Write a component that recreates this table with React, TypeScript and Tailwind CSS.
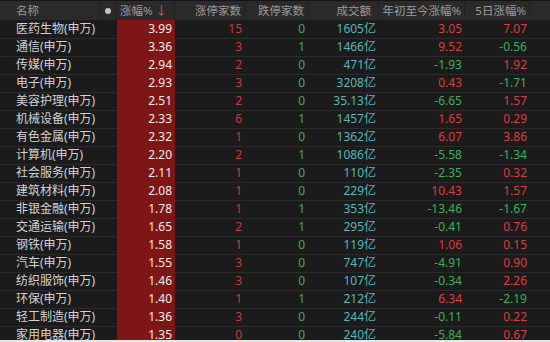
const rows: [string, string, number, number, string, string, string][] = [
  ["医药生物(申万)", "3.99", 15, 0, "1605亿", "3.05", "7.07"],
  ["通信(申万)", "3.36", 3, 1, "1466亿", "9.52", "-0.56"],
  ["传媒(申万)", "2.94", 2, 0, "471亿", "-1.93", "1.92"],
  ["电子(申万)", "2.93", 3, 0, "3208亿", "0.43", "-1.71"],
  ["美容护理(申万)", "2.51", 2, 0, "35.13亿", "-6.65", "1.57"],
  ["机械设备(申万)", "2.33", 6, 1, "1457亿", "1.65", "0.29"],
  ["有色金属(申万)", "2.32", 1, 0, "1362亿", "6.07", "3.86"],
  ["计算机(申万)", "2.20", 2, 1, "1086亿", "-5.58", "-1.34"],
  ["社会服务(申万)", "2.11", 1, 0, "110亿", "-2.35", "0.32"],
  ["建筑材料(申万)", "2.08", 1, 0, "229亿", "10.43", "1.57"],
  ["非银金融(申万)", "1.78", 1, 1, "353亿", "-13.46", "-1.67"],
  ["交通运输(申万)", "1.65", 2, 1, "295亿", "-0.41", "0.76"],
  ["钢铁(申万)", "1.58", 1, 0, "119亿", "1.06", "0.15"],
  ["汽车(申万)", "1.55", 3, 0, "747亿", "-4.91", "0.90"],
  ["纺织服饰(申万)", "1.46", 3, 0, "107亿", "-0.34", "2.26"],
  ["环保(申万)", "1.40", 1, 1, "212亿", "6.34", "-2.19"],
  ["轻工制造(申万)", "1.36", 3, 0, "244亿", "-0.11", "0.22"],
  ["家用电器(申万)", "1.35", 0, 0, "240亿", "-5.84", "0.67"],
];

const cols = "grid grid-cols-[100px_17px_58px_70px_63px_71px_86px_65px_1fr]";

function tone(v: string) {
  return v.startsWith("-") ? "text-[#3fae5c]" : "text-[#dc3c42]";
}

export default function App() {
  return (
    <div
      className="relative w-[550px] h-[342px] overflow-hidden bg-[#1b1b1b] text-[12px]"
      style={{ fontFamily: '"Noto Sans", "Noto Sans CJK SC", sans-serif' }}
    >
      {/* header */}
      <div className={`${cols} h-[20px] items-center bg-[#2a2a2a] border-t border-[#141414] text-[#9c9c9c] text-[11.5px]`}>
        <div className="pl-[16px] h-full flex items-center border-r border-[#222]">名称</div>
        <div className="h-full flex items-center justify-center border-r border-[#222]">
          <span className="w-[6px] h-[6px] rounded-full bg-[#c4c4c4]" />
        </div>
        <div className="h-full flex items-center justify-end pr-[7px] border-r border-[#222]">
          涨幅%<span className="ml-[3px] text-[#e2583c]">↓</span>
        </div>
        <div className="h-full flex items-center justify-end pr-[3px] border-r border-[#222]">涨停家数</div>
        <div className="h-full flex items-center justify-end pr-[3px] border-r border-[#222]">跌停家数</div>
        <div className="h-full flex items-center justify-end pr-[7px] border-r border-[#222]">成交额</div>
        <div className="h-full flex items-center justify-end pr-[3px] border-r border-[#222]">年初至今涨幅%</div>
        <div className="h-full flex items-center justify-end pr-[3px] border-r border-[#222]">5日涨幅%</div>
        <div />
      </div>

      {rows.map(([name, chg, up, down, amt, ytd, d5]) => (
        <div key={name} className={`${cols} h-[18px] items-center`}>
          <div className="pl-[16px] h-full flex items-center text-[#d2d2d2] border-b border-[#2b2b2b]">{name}</div>
          <div className="h-full border-b border-[#2b2b2b]" />
          <div className="h-full flex items-center justify-end pr-[3px] bg-[#7e1616] text-[#ececec] border-b border-[#5a0e0e]">{chg}</div>
          <div className="h-full flex items-center justify-end pr-[3px] text-[#c93a3c] border-b border-[#2b2b2b]">{up}</div>
          <div className="h-full flex items-center justify-end pr-[3px] text-[#3fae5c] border-b border-[#2b2b2b]">{down}</div>
          <div className="h-full flex items-center justify-end pr-[3px] text-[#5ab5b8] border-b border-[#2b2b2b]">{amt}</div>
          <div className={`h-full flex items-center justify-end pr-[3px] border-b border-[#2b2b2b] ${tone(ytd)}`}>{ytd}</div>
          <div className={`h-full flex items-center justify-end pr-[3px] border-b border-[#2b2b2b] ${tone(d5)}`}>{d5}</div>
          <div className="h-full border-b border-[#2b2b2b]" />
        </div>
      ))}

      <div className="absolute left-0 right-0 bottom-0 h-[2px] bg-[#e6e6e6]" />
    </div>
  );
}
